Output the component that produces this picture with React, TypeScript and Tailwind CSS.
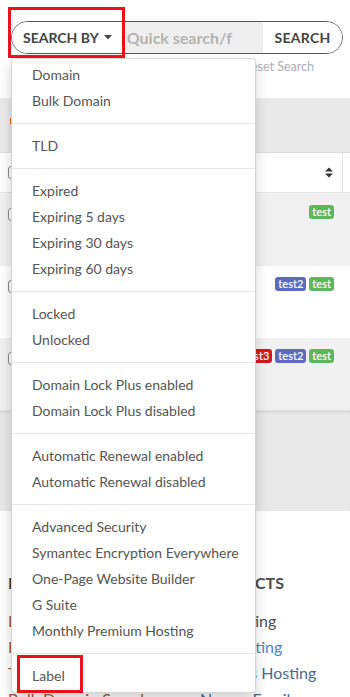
const groups: string[][] = [
  ['Domain', 'Bulk Domain'],
  ['TLD'],
  ['Expired', 'Expiring 5 days', 'Expiring 30 days', 'Expiring 60 days'],
  ['Locked', 'Unlocked'],
  ['Domain Lock Plus enabled', 'Domain Lock Plus disabled'],
  ['Automatic Renewal enabled', 'Automatic Renewal disabled'],
  ['Advanced Security', 'Symantec Encryption Everywhere', 'One-Page Website Builder', 'G Suite', 'Monthly Premium Hosting'],
  ['Label'],
]

const Badge = ({ label, color }: { label: string; color: string }) => (
  <span className={`${color} text-white text-[11px] leading-[14px] font-semibold px-[3px] rounded-[3px]`}>{label}</span>
)

const Checkbox = () => <span className="block w-[13px] h-[13px] border border-[#888] rounded-[3px] bg-white" />

const SortIcon = () => (
  <svg width="8" height="11" viewBox="0 0 8 11">
    <path d="M0 4.5 L4 0.5 L8 4.5 Z M0 6.5 L8 6.5 L4 10.5 Z" fill="#333" />
  </svg>
)

const Row = ({ bg, badges }: { bg: string; badges: { label: string; color: string }[] }) => (
  <div className={`${bg} flex h-[72px] pl-[8px] pr-[16px] pt-[11px]`}>
    <div className="pt-[3px]">
      <Checkbox />
    </div>
    <div className="flex-1 flex justify-end gap-[3px] items-start">
      {badges.map((b) => (
        <Badge key={b.label} label={b.label} color={b.color} />
      ))}
    </div>
  </div>
)

const App = () => {
  return (
    <div className="relative w-[350px] h-[697px] overflow-hidden bg-white font-['Lato','Liberation_Sans',sans-serif]">
      {/* Search bar */}
      <div className="pt-[21px] pl-[11px] pr-[7px]">
        <div className="flex h-[33px] border border-[#555] rounded-full overflow-hidden">
          <button className="flex items-center gap-[5px] pl-[11px] pr-[12px] bg-white text-[#444] text-[14px] font-bold">
            SEARCH BY
            <svg width="8" height="5" viewBox="0 0 8 5">
              <path d="M0 0 L8 0 L4 4.5 Z" fill="#444" />
            </svg>
          </button>
          <div className="flex-1 bg-[#efefef] flex items-center pl-[3px] text-[16px] font-bold text-[#b3b3b3] overflow-hidden whitespace-nowrap">
            Quick search/f
          </div>
          <button className="w-[79px] bg-white text-[#444] text-[14px] font-bold tracking-[0.3px]">SEARCH</button>
        </div>
      </div>
      <div className="h-[44px] flex justify-end pr-[36px] pt-[4px]">
        <span className="text-[12.5px] text-[#b0b0b0]">Reset Search</span>
      </div>

      {/* Tab band */}
      <div className="h-[54px] bg-[#e9e9e9] relative">
        <span className="absolute left-[10px] top-[19px] w-[6px] h-[8px] bg-[#e8601c] rounded-[2px]" />
      </div>

      {/* Table header */}
      <div className="flex h-[41px] border-t border-[#dcdcdc] border-b border-b-[#e6e6e6] bg-white">
        <div className="flex-1 flex items-center pl-[8px] pr-[9px] border-r border-[#e3e3e3]">
          <Checkbox />
          <div className="flex-1" />
          <SortIcon />
        </div>
        <div className="w-[7px]" />
      </div>

      <div className="h-px bg-[#f4f4f4]" />
      <Row bg="bg-[#f1f1f1]" badges={[{ label: 'test', color: 'bg-[#5cb85c]' }]} />
      <Row
        bg="bg-white"
        badges={[
          { label: 'test2', color: 'bg-[#5b6bbf]' },
          { label: 'test', color: 'bg-[#5cb85c]' },
        ]}
      />
      <Row
        bg="bg-[#f1f1f1]"
        badges={[
          { label: 'test3', color: 'bg-[#d9161b]' },
          { label: 'test2', color: 'bg-[#5b6bbf]' },
          { label: 'test', color: 'bg-[#5cb85c]' },
        ]}
      />
      <div className="h-[101px] bg-[#e8e8e8] border-t border-[#dedede] shadow-[inset_0_2px_2px_rgba(0,0,0,0.06)]" />

      {/* Footer */}
      <div className="grid grid-cols-[182px_1fr] pl-[8px] pt-[62px] text-[16px]">
        <h3 className="font-bold text-[#3a3f4a] leading-[20px]">DOMAINS</h3>
        <h3 className="font-bold text-[#4a4a4a] leading-[20px] pl-[8px]">PRODUCTS</h3>
        <ul className="mt-[15px] flex flex-col text-[#a0582e] leading-[26px]">
          <li>Domain Names</li>
          <li>Free WHOIS Privacy</li>
          <li>Transfer Domains</li>
          <li>Bulk Domain Search</li>
        </ul>
        <ul className="mt-[15px] flex flex-col leading-[26px]">
          <li className="text-[#4f4a5a] pl-[2px]">SSL Hosting</li>
          <li className="text-[#4a86c5]">Web Hosting</li>
          <li className="text-[#4d6a8c] pl-[6px]">Business Hosting</li>
          <li className="text-[#4a6a8c] pl-[10px]">Names Email</li>
        </ul>
      </div>

      {/* Dropdown menu */}
      <div className="absolute left-[11px] top-[58px] w-[245px] bg-white border border-[#d5d5d5] rounded-[4px] shadow-[0_6px_12px_rgba(0,0,0,0.18)] py-[3px] z-10">
        {groups.map((g, gi) => (
          <div key={gi}>
            {gi > 0 && <div className="h-px bg-[#e5e5e5] my-[9px]" />}
            {g.map((item) => (
              <div key={item} className="px-[20px] py-[3px] leading-[20px] text-[14px] text-[#555] whitespace-nowrap">
                {item}
              </div>
            ))}
          </div>
        ))}
      </div>

      {/* Annotation boxes */}
      <div className="absolute left-[8px] top-[7px] w-[117px] h-[51px] border-[3px] border-[#e8121d] z-20 pointer-events-none" />
      <div className="absolute left-[17px] top-[655px] w-[66px] h-[38px] border-[3px] border-[#e8121d] z-20 pointer-events-none" />
    </div>
  )
}

export default App
